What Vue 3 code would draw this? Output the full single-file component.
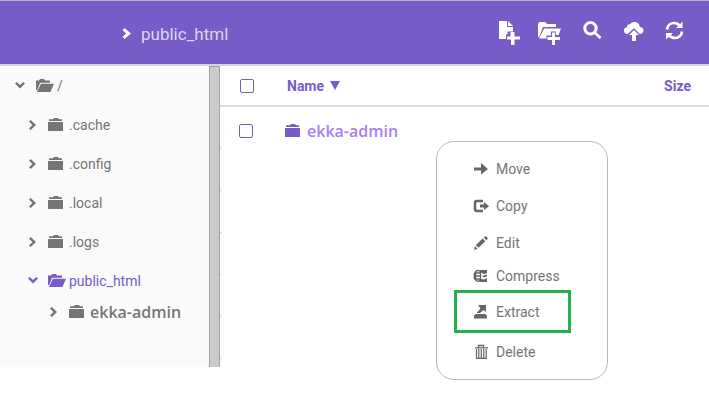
<script setup>
const tree = [
  { name: '/', depth: 0, open: true },
  { name: '.cache', depth: 1 },
  { name: '.config', depth: 1 },
  { name: '.local', depth: 1 },
  { name: '.logs', depth: 1 },
  { name: 'public_html', depth: 1, open: true, active: true },
  { name: 'ekka-admin', depth: 2 },
]
const menu = ['Move', 'Copy', 'Edit', 'Compress', 'Extract', 'Delete']
const rules = 6
</script>

<template>
  <div class="page">
    <svg class="defs" width="0" height="0" aria-hidden="true">
      <symbol id="folder" viewBox="0 0 15 13">
        <path d="M1 3V1.2H5L6 0H10L11 1.2H14V3ZM0 4H15V13H0Z" />
      </symbol>
      <symbol id="folder-open" viewBox="0 0 18 13">
        <path d="M0 11V1.5H3L4 0H8L9 1.5H14V3.7H4.2L1.2 11ZM5 4.7H18L14.4 13H0.8Z" />
      </symbol>
      <symbol id="right" viewBox="0 0 8 10">
        <path d="M0 1.7 1.7 0 7 5 1.7 10 0 8.3 3.5 5Z" />
      </symbol>
      <symbol id="down" viewBox="0 0 10 7">
        <path d="M0 1.5 1.7 0 5 3 8.3 0 10 1.5 5 6.5Z" />
      </symbol>
    </svg>

    <header class="topbar">
      <div class="crumb">
        <svg width="9" height="11" viewBox="0 0 9 11"><path d="M0.5 2 2.5 0 9 5.5 2.5 11 0.5 9 4 5.5Z" /></svg>
        <span>public_html</span>
      </div>
      <div class="tools">
        <svg class="new-file" width="22" height="25" viewBox="0 0 22 25">
          <path d="M0 0H8V6H14V10.5H8.5V13.5H7V18H0Z" /><path d="M9 0 14 5H9Z" />
          <path d="M11.5 11H15.5V15.5H21V18.5H15.5V24H12V18.5H8V15.5H11.5Z" />
        </svg>
        <svg class="new-folder" width="24" height="25" viewBox="0 0 24 25">
          <path d="M0 16V3L1.5 1H7.5L9 3H18V6H5L1.2 16ZM6 7.5H23L20.5 14H17.8V10.5H13V14.5H8.5V17.5H1Z" />
          <path d="M14 11.5H17V16H22V19H17V24H14V19H9.5V16H14Z" />
        </svg>
        <svg class="search" width="19" height="19" viewBox="0 0 19 19">
          <circle cx="7.5" cy="7.3" r="5.7" fill="none" stroke="#fff" stroke-width="3" />
          <path d="M11.5 13 13.3 11.2 18.5 16 16.5 18.3Z" />
        </svg>
        <svg class="upload" width="20" height="19" viewBox="0 0 20 19">
          <path d="M3.5 12C1.2 11.8 0 10.3 0 8.4 0 6.5 1.5 5.2 3 5.3 2.8 3.3 4.3 2 6 2.3 7 .8 8.4 0 10.3 0 13.6 0 15.6 2.2 15.8 5 18 5 19.5 6.5 19.5 8.5 19.5 10.7 18 12 15.8 12L10 6.2Z" />
          <path d="M10 8 15 13H12V19H8V13H5Z" />
        </svg>
        <svg class="refresh" width="19" height="19" viewBox="0 0 19 19">
          <path d="M2 8.5C2.5 4 6 2 9 2 11.5 2 13.5 3 15.3 5M17 10.5C16.5 15 13 17 10 17 7.5 17 5.3 15.8 3.7 14" fill="none" stroke="#fff" stroke-width="2.7" />
          <path d="M17.5 .5V7H11ZM1 18.5V12H8Z" />
        </svg>
      </div>
    </header>

    <div class="content">
      <aside class="sidebar">
        <div v-for="node in tree" :key="node.name" class="node" :class="['depth-' + node.depth, { active: node.active }]">
          <span class="toggle">
            <svg v-if="node.open" width="10" height="7"><use href="#down" /></svg>
            <svg v-else width="8" height="10"><use href="#right" /></svg>
          </span>
          <svg v-if="node.open" class="folder" width="18" height="13"><use href="#folder-open" /></svg>
          <svg v-else class="folder" width="15" height="13"><use href="#folder" /></svg>
          <span class="label">{{ node.name }}</span>
        </div>
      </aside>
      <div class="scrollbar"></div>

      <main class="files">
        <div class="head">
          <span class="check"></span>
          <span class="name">Name</span>
          <svg class="sort" width="10" height="9" viewBox="0 0 10 9"><path d="M0 0H10L5 9Z" /></svg>
          <span class="size">Size</span>
        </div>
        <div class="row">
          <span class="check"></span>
          <svg class="folder" width="15" height="13"><use href="#folder" /></svg>
          <span class="file">ekka-admin</span>
        </div>
        <div class="rules"><i v-for="n in rules" :key="n"></i></div>
      </main>
    </div>

    <div class="menu">
      <div v-for="item in menu" :key="item" class="item" :class="item.toLowerCase()">
        <svg width="16" height="16" viewBox="0 0 16 16">
          <path v-if="item === 'Move'" d="M1 6.5H8V2L15 8 8 13.5V9.5H1Z" />
          <g v-else-if="item === 'Copy'">
            <path d="M10 3H4Q2 3 2 5V11Q2 13 4 13H10" fill="none" stroke="#666" stroke-width="2.5" />
            <path d="M7 6.5H11V4L16 8.3 11 12V9.5H7Z" />
          </g>
          <path v-else-if="item === 'Edit'" d="M1 15 2 11 4.5 13.7ZM2.8 10 9.7 3.5 12.3 6.2 5.5 12.8ZM10.7 2.5 12.7 1 15 3.3 13.3 5.2Z" />
          <g v-else-if="item === 'Compress'">
            <path d="M2.5 3.5Q5 1.5 7.5 3.5V12Q5 14.5 2.5 12ZM1 5H7M1 8H7M1 11H7M1.3 5V11" fill="none" stroke="#666" stroke-width="1.3" />
            <path d="M6 2H14V5L11 6.2 8 4.5ZM9 8 14 6.5V8.3L11 9.5ZM8 11 11 11.5 14 10V14H6Z" />
          </g>
          <path v-else-if="item === 'Extract'" d="M1 14.5V11.5L3 10H12L14 11.5V14.5ZM5 1H13V8L10.5 6 7 9H3.5L7.5 4.5Z" />
          <g v-else>
            <path d="M2 3.8H15M5.5 3.5V1.5H10.5V3.5" fill="none" stroke="#666" stroke-width="1.3" />
            <path d="M3.5 5.3V14.3H13.2V5.3M5.8 5V14M8.3 5V14M10.8 5V14" fill="none" stroke="#666" stroke-width="1.2" />
          </g>
        </svg>
        <span>{{ item }}</span>
      </div>
    </div>
  </div>
</template>

<style>
body { background: #fff; }
</style>

<style scoped>
.page { position: relative; width: 709px; height: 405px; overflow: hidden; font-family: Roboto, sans-serif; font-size: 14px; box-sizing: border-box; }
.page * { box-sizing: border-box; }
.defs { position: absolute; }
svg { display: block; flex: none; fill: currentColor; }
.topbar { height: 66px; display: flex; justify-content: space-between; background: #775bc7; border-top: 1px solid #b4b0bd; border-bottom: 2px solid #d6d5da; color: #fff; }
.crumb { display: flex; align-items: center; gap: 10px; margin-left: 122px; padding-top: 2px; font-size: 17px; }
.crumb span { color: #ddd6f1; }
.tools { display: flex; align-items: flex-start; padding: 20px 25px 0 0; }
.new-file { margin-right: 17px; }
.new-folder { margin-right: 21px; }
.search { margin-right: 22px; }
.upload { margin: 1px 21px 0 0; }
.content { display: flex; height: 301px; }
.sidebar { width: 209px; background: #fafafa; color: #757575; }
.node { display: flex; align-items: center; height: 39px; }
.depth-0 { padding-left: 15px; }
.depth-1 { padding-left: 28px; }
.depth-2 { padding-left: 49px; height: 23px; }
.toggle { width: 10px; display: flex; justify-content: center; margin-right: 11px; }
.depth-1 .toggle { margin-right: 10px; }
.depth-2 .toggle { margin-right: 10px; }
.folder + .label { margin-left: 6px; }
.node .folder[width="18"] + .label { margin-left: 3px; }
.active { color: #775bc7; }
.depth-2 .label { font: 600 16px "Open Sans", sans-serif; }
.scrollbar { width: 11px; background: #cbcbcb; border: 1px solid #a3a3a3; border-bottom: 0; }
.files { width: 489px; color: #775bc7; background: #fff; }
.head { height: 41px; display: flex; align-items: center; padding-left: 20px; border-bottom: 2px solid #dcdcdc; font-weight: 700; }
.check { width: 14px; height: 14px; border: 1px solid #775bc7; border-radius: 2px; flex: none; }
.name { margin-left: 33px; }
.sort { margin-left: 6px; }
.size { margin-left: auto; margin-right: 18px; }
.row { height: 41px; display: flex; align-items: center; padding: 6px 0 0 19px; }
.row .folder { margin-left: 32px; }
.file { color: #a97df7; font: 600 16px "Open Sans", sans-serif; }
.row .file { margin-left: 7px; }
.rules { display: flex; flex-direction: column; gap: 41px; }
.rules i { display: block; width: 2px; height: 1px; background: #ddd; }
.menu { position: absolute; left: 436px; top: 141px; width: 172px; height: 239px; border: 1px solid #bababa; border-radius: 18px; background: #fff; padding-top: 8px; color: #666; }
.item { display: flex; align-items: center; gap: 7px; height: 37px; padding-left: 36px; }
.item span { color: #757575; }
.compress { height: 29px; }
.extract { height: 43px; width: 117px; margin: 0 0 0 17px; padding-left: 16px; border: 3px solid #22b14c; }
</style>
